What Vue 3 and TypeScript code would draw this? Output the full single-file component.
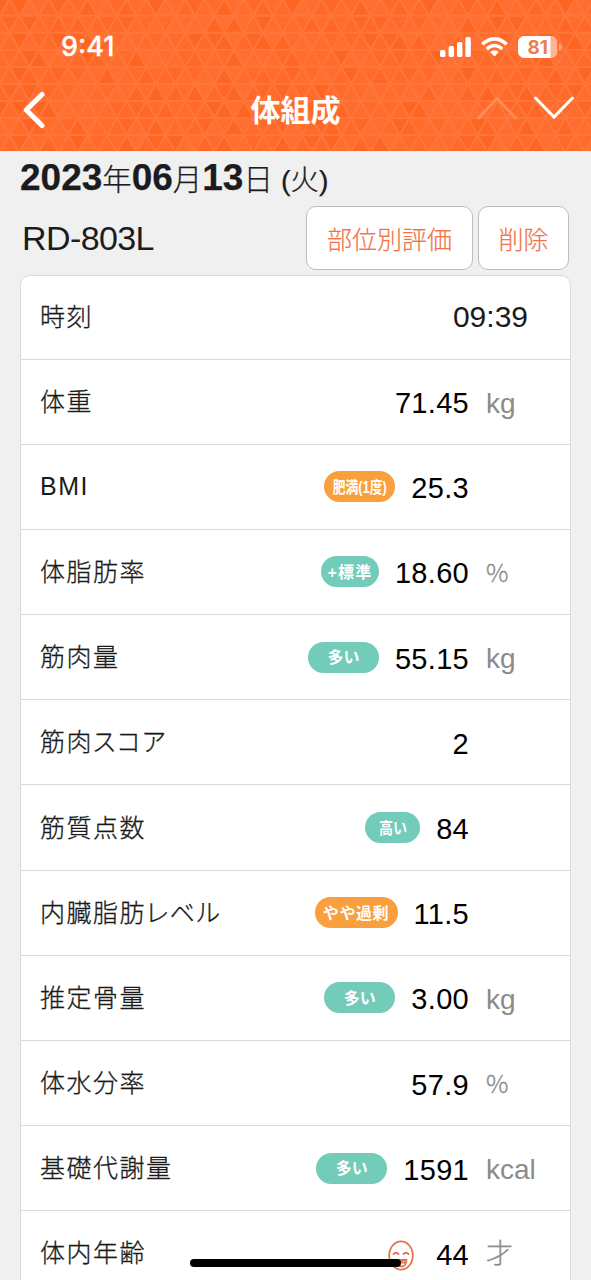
<script setup lang="ts">
interface Row {
  label: string
  value: string
  unit?: string
  badge?: string
  tone?: 'green' | 'orange'
  size?: string
  face?: boolean
}

const rows: Row[] = [
  { label: '体重', value: '71.45', unit: 'kg' },
  { label: 'BMI', value: '25.3', badge: '肥満(1度)', tone: 'orange', size: 'condensed' },
  { label: '体脂肪率', value: '18.60', unit: '%', badge: '+標準', tone: 'green', size: 'plus' },
  { label: '筋肉量', value: '55.15', unit: 'kg', badge: '多い', tone: 'green', size: 'regular' },
  { label: '筋肉スコア', value: '2' },
  { label: '筋質点数', value: '84', badge: '高い', tone: 'green', size: 'small' },
  { label: '内臓脂肪レベル', value: '11.5', badge: 'やや過剰', tone: 'orange', size: 'wide' },
  { label: '推定骨量', value: '3.00', unit: 'kg', badge: '多い', tone: 'green', size: 'regular' },
  { label: '体水分率', value: '57.9', unit: '%' },
  { label: '基礎代謝量', value: '1591', unit: 'kcal', badge: '多い', tone: 'green', size: 'regular' },
  { label: '体内年齢', value: '44', unit: '才', face: true },
]

// Triangular mosaic behind the header.
const side = 19.5
const rise = 17.05
const tones = ['#ff6b2b', '#ff6726', '#ff6e30', '#fd6522', '#ff6c2e', '#ff6929', '#ff6f32']
const triangles: { points: string; fill: string }[] = []
for (let r = 0; r < 10; r++) {
  const top = -1.3 + r * rise
  const shift = r % 2 ? side / 2 : 0
  for (let c = -2; c < 32; c++) {
    const x = c * side + shift
    const pick = (n: number) => tones[Math.abs((r * 7 + c * 13 + n + ((r * c * 5) % 11)) % tones.length)]
    triangles.push({
      points: `${x},${top + rise} ${x + side},${top + rise} ${x + side / 2},${top}`,
      fill: pick(0),
    })
    triangles.push({
      points: `${x + side / 2},${top} ${x + side * 1.5},${top} ${x + side},${top + rise}`,
      fill: pick(3),
    })
  }
}
</script>

<template>
  <div class="screen">
    <header class="header">
      <svg class="mosaic" width="591" height="151" viewBox="0 0 591 151">
        <polygon v-for="(t, i) in triangles" :key="i" :points="t.points" :fill="t.fill" stroke="#ff763b" stroke-width="1.9" />
      </svg>
      <div class="status">
        <span class="clock">9:41</span>
        <div class="indicators">
          <svg width="31" height="20" viewBox="0 0 31 20" fill="#fff">
            <rect x="0" y="13" width="5.4" height="7" rx="1.6" />
            <rect x="8.6" y="9" width="5.4" height="11" rx="1.6" />
            <rect x="17" y="5" width="5.4" height="15" rx="1.6" />
            <rect x="25.4" y="0" width="5.4" height="20" rx="1.6" />
          </svg>
          <svg class="wifi" width="27" height="20" viewBox="0 0 27 20" fill="none" stroke="#fff" stroke-width="3.5">
            <path d="M1.3 7.3Q13.5-3.7 25.7 7.3" />
            <path d="M5.7 12Q13.5 5 21.3 12" />
            <path d="M13.5 19.5L9.1 15Q13.5 11.6 17.9 15Z" fill="#fff" stroke="none" />
          </svg>
          <svg class="battery" width="45" height="22" viewBox="0 0 45 22">
            <defs>
              <clipPath id="cell"><rect width="39.5" height="22" rx="6.5" /></clipPath>
            </defs>
            <g clip-path="url(#cell)">
              <rect width="39.5" height="22" fill="#ffb493" />
              <rect width="32.5" height="22" fill="#fff" />
            </g>
            <path d="M41 7.5Q44 8.5 44 11T41 14.5Z" fill="#ffa57c" />
            <text x="19.7" y="18" text-anchor="middle" class="level">81</text>
          </svg>
        </div>
      </div>
      <nav class="bar">
        <svg class="back" width="24" height="38" viewBox="0 0 24 38" fill="none" stroke="#fff" stroke-width="5" stroke-linecap="round" stroke-linejoin="round">
          <path d="M20 3.5L4.3 19L20 34.5" />
        </svg>
        <h1 class="title">体組成</h1>
        <div class="pager">
          <svg width="40" height="24" viewBox="0 0 40 24" fill="none" stroke="#ff8d58" stroke-width="2.8" stroke-linecap="round">
            <path d="M1.5 22L20 2.5L38.5 22" />
          </svg>
          <svg width="40" height="24" viewBox="0 0 40 24" fill="none" stroke="#fff" stroke-width="3" stroke-linecap="round">
            <path d="M1.5 2L20 21L38.5 2" />
          </svg>
        </div>
      </nav>
    </header>

    <main class="content">
      <p class="date"><b>2023</b>年<b>06</b>月<b>13</b>日 <span class="weekday">(火)</span></p>
      <div class="device">
        <span class="model">RD-803L</span>
        <button class="action parts">部位別評価</button>
        <button class="action remove">削除</button>
      </div>
      <section class="list">
        <div class="row first">
          <span class="label">時刻</span>
          <span class="time">09:39</span>
        </div>
        <div v-for="row in rows" :key="row.label" class="row">
          <span class="label" :class="{ latin: row.label === 'BMI' }">{{ row.label }}</span>
          <span v-if="row.badge" class="badge" :class="[row.tone, row.size]"><span class="badge-text">{{ row.badge }}</span></span>
          <svg v-if="row.face" class="face" width="26" height="31" viewBox="0 0 26 31" fill="none" stroke="#e2754f" stroke-width="1.8" stroke-linecap="round">
            <ellipse cx="13" cy="15.5" rx="11.8" ry="14.2" />
            <path d="M5.5 14Q8 11.5 10.5 14M15.5 14Q18 11.5 20.5 14" />
            <path d="M7.5 20H18.5Q18 26.5 14 26.5Q9 26.5 7.5 20ZM14 20V22.5H17" />
          </svg>
          <span class="value">{{ row.value }}</span>
          <span class="unit" :class="{ kanji: row.unit === '才', percent: row.unit === '%' }">{{ row.unit }}</span>
        </div>
      </section>
    </main>
    <div class="home-indicator"></div>
  </div>
</template>

<style>
body {
  margin: 0;
  overflow: hidden;
}
</style>

<style scoped>
.screen {
  position: relative;
  width: 591px;
  height: 1280px;
  overflow: hidden;
  background: #f0f0f0;
  color: #1c1c1e;
  font-family: "Liberation Sans", "Noto Sans CJK JP", sans-serif;
}
.header {
  position: relative;
  height: 151px;
  overflow: hidden;
  background: #ff6827;
}
.mosaic {
  position: absolute;
  inset: 0;
}
.status {
  position: relative;
  display: flex;
  justify-content: space-between;
  align-items: center;
  box-sizing: border-box;
  height: 72px;
  padding: 21px 28px 0 61px;
}
.clock {
  padding-top: 1px;
  color: #fff;
  font: 500 27px/30px Inter, sans-serif;
  -webkit-text-stroke: 0.3px #fff;
}
.indicators {
  display: flex;
  align-items: center;
}
.wifi {
  margin-left: 10px;
}
.battery {
  margin-left: 10px;
}
.level {
  font: 700 19px Inter, sans-serif;
  fill: #ec7d50;
}
.bar {
  position: relative;
  display: grid;
  grid-template-columns: 120px 1fr 120px;
  align-items: center;
  height: 76px;
}
.back {
  margin-left: 22px;
}
.title {
  margin: 0;
  padding-top: 2px;
  color: #fff;
  text-align: center;
  font-size: 30px;
  font-weight: 700;
  line-height: 40px;
}
.pager {
  display: flex;
  justify-content: flex-end;
  gap: 17px;
  padding-right: 17px;
  margin-top: -5px;
}
.content {
  padding: 0 20px;
}
.date {
  margin: 0;
  height: 55px;
  font-size: 29.4px;
  font-weight: 300;
  line-height: 53px;
  white-space: nowrap;
  -webkit-text-stroke: 0.25px currentColor;
}
.date b {
  font-size: 37px;
  font-weight: 700;
}
.weekday {
  font-size: 28.5px;
}
.device {
  display: flex;
  align-items: center;
  height: 64px;
  padding-right: 2px;
}
.model {
  flex: 1;
  padding: 0 0 0 2px;
  font-size: 34px;
  letter-spacing: -0.6px;
}
.action {
  box-sizing: border-box;
  height: 64px;
  padding: 0 0 1px;
  border: 1.5px solid #bdbdbd;
  border-radius: 10px;
  background: #fff;
  color: #ef7448;
  font-family: "Noto Sans CJK JP", sans-serif;
  font-size: 25px;
  font-weight: 300;
  -webkit-text-stroke: 0.2px currentColor;
}
.parts {
  width: 167px;
}
.remove {
  width: 91px;
  margin-left: 5px;
}
.list {
  box-sizing: border-box;
  width: 551px;
  margin-top: 5px;
  border: 1.5px solid #dadada;
  border-radius: 10px;
  background: #fff;
}
.row {
  display: flex;
  align-items: center;
  box-sizing: border-box;
  height: 85.2px;
  padding-left: 19px;
  border-top: 1.5px solid #dadada;
}
.row.first {
  height: 82.5px;
  border-top: 0;
}
.label {
  flex: 1;
  padding-bottom: 4px;
  color: #1a1a1a;
  font-size: 25px;
  font-weight: 300;
  letter-spacing: 1.5px;
  font-feature-settings: "palt";
  -webkit-text-stroke: 0.3px currentColor;
}
.label.latin {
  padding-bottom: 0;
  -webkit-text-stroke: 0;
}
.time {
  margin-right: 42px;
  color: #1a1a1a;
  font-size: 30px;
}
.value {
  margin-left: 16px;
  padding-top: 4px;
  color: #000;
  font-size: 29px;
  letter-spacing: 0.3px;
}
.unit {
  width: 84px;
  margin-left: 17px;
  padding-top: 4px;
  box-sizing: border-box;
  color: #8b8b8b;
  font-size: 28px;
}
.unit.kanji {
  padding: 0 0 3px;
  font-size: 27px;
  font-weight: 300;
  -webkit-text-stroke: 0.3px currentColor;
}
.unit.percent {
  padding: 0 0 2px;
  font-family: "Noto Sans CJK JP", sans-serif;
  font-size: 25px;
  line-height: 30px;
  font-weight: 300;
  -webkit-text-stroke: 0.3px currentColor;
}
.face {
  margin: 5px 6px 0 0;
}
.badge {
  display: flex;
  align-items: center;
  justify-content: center;
  height: 31px;
  border-radius: 16px;
  color: #fff;
  font-size: 16px;
  font-weight: 700;
  white-space: nowrap;
}
.badge-text {
  margin-top: -2px;
}
.green {
  background: #73cbb9;
}
.orange {
  background: #f99f3e;
}
.regular {
  width: 71px;
}
.small {
  width: 55px;
}
.small .badge-text {
  transform: scaleX(0.88);
}
.wide {
  width: 83px;
  letter-spacing: 0.6px;
}
.condensed {
  width: 71px;
}
.condensed .badge-text {
  transform: scaleX(0.8);
}
.plus {
  width: 58px;
  letter-spacing: 1.2px;
}
.home-indicator {
  position: absolute;
  left: 190px;
  top: 1259px;
  width: 211px;
  height: 8px;
  border-radius: 4px;
  background: #000;
}
</style>
